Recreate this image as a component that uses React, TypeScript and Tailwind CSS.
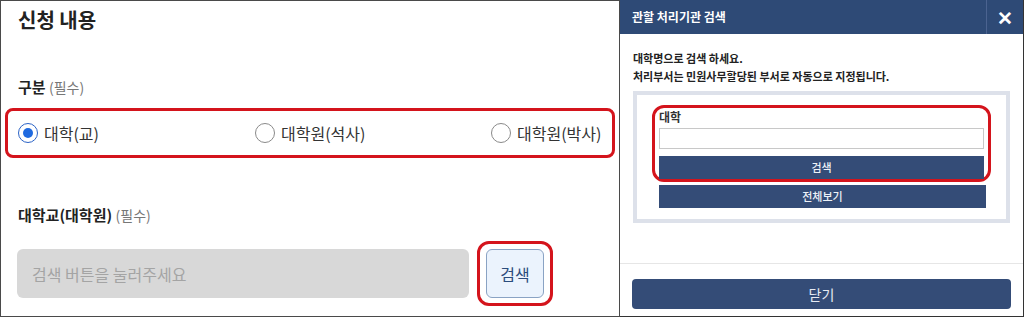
import React from 'react';

const font = { fontFamily: '"Noto Sans CJK KR", "Noto Sans", sans-serif' };

function Radio({ checked, label }: { checked?: boolean; label: string }) {
  return (
    <label className="flex items-center gap-[6px] text-[16px] text-[#333]">
      <span
        className={`flex h-[20px] w-[20px] items-center justify-center rounded-full border ${
          checked ? 'border-[#2b63c6]' : 'border-[#8a8a8a]'
        } bg-white`}
      >
        {checked && <span className="h-[10px] w-[10px] rounded-full bg-[#1f6ae0]" />}
      </span>
      {label}
    </label>
  );
}

export default function App() {
  return (
    <div className="flex h-[317px] w-[1024px] bg-white" style={font}>
      {/* left: form */}
      <div className="flex h-[317px] w-[620px] flex-col border border-[#4a4a4a]">
        <h1 className="pl-[17px] pt-[5px] text-[20px] font-bold leading-[28px] text-[#222]">신청 내용</h1>

        <div className="mt-[43px] pl-[17px] text-[15px] leading-[20px]">
          <span className="font-bold text-[#222]">구분</span>{' '}
          <span className="text-[14px] text-[#777]">(필수)</span>
        </div>

        <div className="mx-[4px] mt-[11px] flex h-[50px] items-center rounded-[8px] border-[3px] border-[#d4141c] pl-[10px]">
          <div className="w-[237px]">
            <Radio checked label="대학(교)" />
          </div>
          <div className="w-[236px]">
            <Radio label="대학원(석사)" />
          </div>
          <Radio label="대학원(박사)" />
        </div>

        <div className="mt-[47px] pl-[17px] text-[15px] leading-[20px]">
          <span className="font-bold text-[#222]">대학교(대학원)</span>{' '}
          <span className="text-[14px] text-[#777]">(필수)</span>
        </div>

        <div className="mt-[16px] flex items-center pl-[16px]">
          <div className="flex h-[49px] w-[452px] items-center rounded-[6px] bg-[#d8d8d8] pl-[15px] text-[16px] text-[#a4a4a4]">
            검색 버튼을 눌러주세요
          </div>
          <div className="ml-[8px] rounded-[12px] border-[3px] border-[#d4141c] px-[6px] py-[5px]">
            <button className="flex h-[49px] w-[58px] items-center justify-center rounded-[6px] border border-[#8aa3c4] bg-[#ebf3fd] text-[16px] text-[#2b4c7c]">
              검색
            </button>
          </div>
        </div>
      </div>

      {/* right: popup */}
      <div className="flex h-[317px] w-[404px] flex-col border-r border-b border-[#333]">
        <div className="flex h-[34px] items-stretch bg-[#2e4a76]">
          <div className="flex flex-1 items-center pl-[12px] text-[12px] font-bold text-white">관할 처리기관 검색</div>
          <div className="flex w-[37px] items-center justify-center border-l border-[#4b6390] text-[19px] font-bold text-white">
            ✕
          </div>
        </div>

        <div className="px-[13px] pt-[15px]">
          <p className="text-[11px] font-bold leading-[18px] text-[#222]">대학명으로 검색 하세요.</p>
          <p className="text-[11px] font-bold leading-[18px] text-[#222]">처리부서는 민원사무할당된 부서로 자동으로 지정됩니다.</p>

          <div className="mt-[6px] h-[132px] border-[4px] border-[#dde1ea] bg-white px-[15px] pt-[10px]">
            <div className="flex h-[77px] flex-col rounded-[12px] border-[3px] border-[#d4141c] px-[4px]">
              <span className="text-[12px] font-bold leading-[18px] text-[#333]">대학</span>
              <div className="mt-[2px] h-[21px] border border-[#c8c8c8] bg-white" />
              <button className="mt-[7px] h-[23px] bg-[#344c77] text-[11px] font-medium text-[#eef2f8]">검색</button>
            </div>
            <button className="ml-[7px] mt-[3px] h-[23px] w-[327px] bg-[#344c77] text-[11px] font-medium text-[#eef2f8]">
              전체보기
            </button>
          </div>
        </div>

        <div className="mt-[40px] border-t border-[#e6e6e6] px-[12px] pt-[15px]">
          <button className="h-[30px] w-full rounded-[4px] bg-[#344c77] text-[14px] text-[#e6ebf3]">닫기</button>
        </div>
      </div>
    </div>
  );
}
